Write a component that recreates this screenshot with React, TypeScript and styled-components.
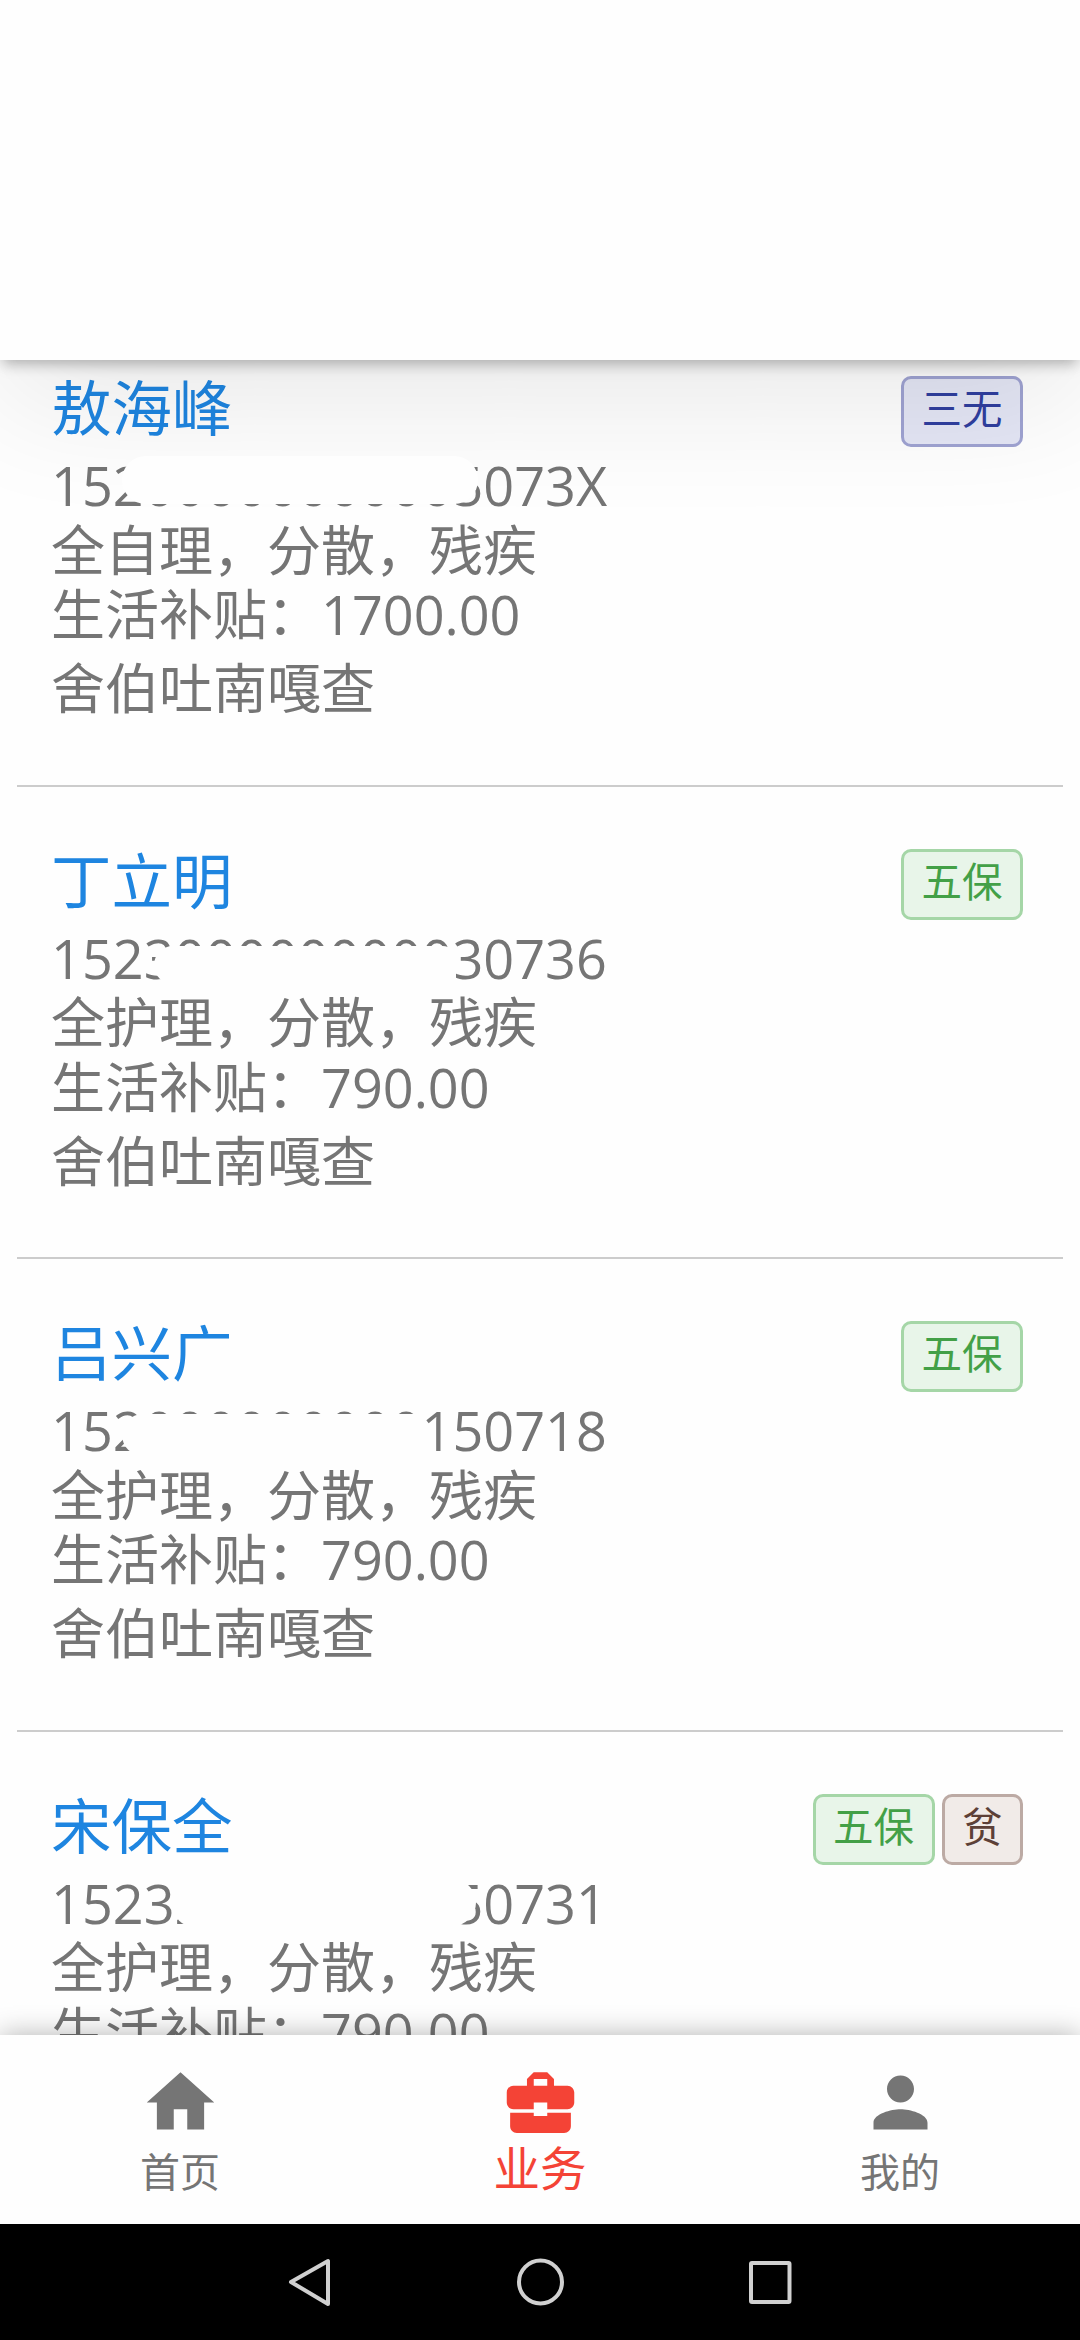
import React from "react";
import styled, { createGlobalStyle } from "styled-components";
import { MdHome, MdBusinessCenter, MdPerson } from "react-icons/md";

const GlobalStyle = createGlobalStyle`
  * { box-sizing: border-box; }
  body {
    margin: 0;
    background: #fefefe;
    font-family: "Open Sans", "Noto Sans CJK SC", sans-serif;
    overflow: hidden;
  }
`;

const Screen = styled.div`
  display: flex;
  flex-direction: column;
  width: 1080px;
  height: 2340px;
  background: #fefefe;
  overflow: hidden;
`;

const Header = styled.header`
  position: relative;
  z-index: 2;
  flex: 0 0 360px;
  background: #fefefe;
  box-shadow:
    0 6px 12px -3px rgba(0, 0, 0, 0.2),
    0 9px 15px -3px rgba(0, 0, 0, 0.1),
    0 40px 130px 0 rgba(0, 0, 0, 0.09);
`;

const List = styled.main`
  flex: 1 1 0;
  min-height: 0;
  overflow: hidden;
  padding: 16px 17px 0;
`;

const Row = styled.article`
  display: flex;
  justify-content: space-between;
  height: 410.5px;
  margin-bottom: 62px;
  padding: 0 40px 0 34px;
  border-bottom: 2px solid #cccccc;
`;

const Details = styled.div`
  display: flex;
  flex-direction: column;
`;

const Name = styled.h2`
  margin: 0 0 14px;
  font-size: 60.5px;
  font-weight: 400;
  line-height: 63px;
  color: #1e85e0;
`;

const Line = styled.div`
  position: relative;
  align-self: flex-start;
  font-size: 54px;
  line-height: 64.5px;
  color: #757575;
  white-space: nowrap;
`;

const Village = styled(Line)`
  margin-top: 9.5px;
`;

const Mask = styled.span<{ $x: number; $y: number; $w: number; $h: number; $r: string }>`
  position: absolute;
  z-index: 3;
  left: ${(p) => p.$x}px;
  top: ${(p) => p.$y}px;
  width: ${(p) => p.$w}px;
  height: ${(p) => p.$h}px;
  border-radius: ${(p) => p.$r};
  background: #fefefe;
`;

const Tags = styled.div`
  display: flex;
  align-items: flex-start;
  gap: 7px;
`;

const tones = {
  indigo: { text: "#303f9f", fill: "#e4e6f5", line: "#9fa3d2" },
  green: { text: "#43a047", fill: "#e8f5e9", line: "#a5d6a7" },
  brown: { text: "#5d4037", fill: "#f1ebe8", line: "#bcaaa4" },
};
type Tone = keyof typeof tones;

const Tag = styled.span<{ $tone: Tone }>`
  height: 71px;
  padding: 0 17.5px;
  border: 3px solid ${(p) => tones[p.$tone].line};
  border-radius: 10px;
  background: ${(p) => tones[p.$tone].fill};
  color: ${(p) => tones[p.$tone].text};
  font-size: 40.5px;
  line-height: 59px;
`;

const TabBar = styled.nav`
  position: relative;
  z-index: 2;
  flex: 0 0 189px;
  display: grid;
  grid-template-columns: repeat(3, 1fr);
  background: #fefefe;
  box-shadow: 0 0 26px 0 rgba(0, 0, 0, 0.3);
`;

const Tab = styled.div<{ $active?: boolean }>`
  display: flex;
  flex-direction: column;
  align-items: center;
  padding-top: 27px;
  color: ${(p) => (p.$active ? "#f44336" : "#757575")};
  font-size: ${(p) => (p.$active ? 46.5 : 40)}px;
  line-height: 54px;
  svg {
    width: 81px;
    height: 81px;
    margin-bottom: ${(p) => (p.$active ? -2 : 2)}px;
  }
`;

const SystemBar = styled.footer`
  position: relative;
  z-index: 3;
  flex: 0 0 116px;
  display: flex;
  align-items: center;
  justify-content: center;
  gap: 181px;
  background: #000;
  svg {
    width: 49px;
    height: 49px;
    fill: none;
    stroke: #d0d0d0;
    stroke-width: 4;
    stroke-linejoin: round;
  }
`;

type Person = {
  name: string;
  id: string;
  mask: [number, number, number, number, string];
  care: string;
  allowance: string;
  tags: [string, Tone][];
};

const people: Person[] = [
  { name: "敖海峰", id: "15200000000005073X", mask: [71, 3, 356, 48, "24px"], care: "全自理，分散，残疾", allowance: "1700.00", tags: [["三无", "indigo"]] },
  { name: "丁立明", id: "152300000000030736", mask: [103, 20, 302, 38, "20px 14px 0 20px"], care: "全护理，分散，残疾", allowance: "790.00", tags: [["五保", "green"]] },
  { name: "吕兴广", id: "152000000000150718", mask: [71, 16, 302, 42, "22px 0 0 22px"], care: "全护理，分散，残疾", allowance: "790.00", tags: [["五保", "green"]] },
  { name: "宋保全", id: "152320000000050731", mask: [123, 8, 302, 47, "4px 24px 24px 18px"], care: "全护理，分散，残疾", allowance: "790.00", tags: [["五保", "green"], ["贫", "brown"]] },
];

export default function App() {
  return (
    <>
      <GlobalStyle />
      <Screen>
        <Header />
        <List>
          {people.map((p) => (
            <Row key={p.name}>
              <Details>
                <Name>{p.name}</Name>
                <Line>
                  {p.id}
                  <Mask $x={p.mask[0]} $y={p.mask[1]} $w={p.mask[2]} $h={p.mask[3]} $r={p.mask[4]} />
                </Line>
                <Line>{p.care}</Line>
                <Line>生活补贴：{p.allowance}</Line>
                <Village>舍伯吐南嘎查</Village>
              </Details>
              <Tags>
                {p.tags.map(([label, tone]) => (
                  <Tag key={label} $tone={tone}>{label}</Tag>
                ))}
              </Tags>
            </Row>
          ))}
        </List>
        <TabBar>
          <Tab><MdHome />首页</Tab>
          <Tab $active><MdBusinessCenter />业务</Tab>
          <Tab><MdPerson />我的</Tab>
        </TabBar>
        <SystemBar>
          <svg viewBox="0 0 49 49"><path d="M5 24 42 3v43z" /></svg>
          <svg viewBox="0 0 49 49"><circle cx="24.5" cy="24" r="21.5" /></svg>
          <svg viewBox="0 0 49 49"><rect x="5" y="5" width="38.5" height="39" rx="1" /></svg>
        </SystemBar>
      </Screen>
    </>
  );
}
